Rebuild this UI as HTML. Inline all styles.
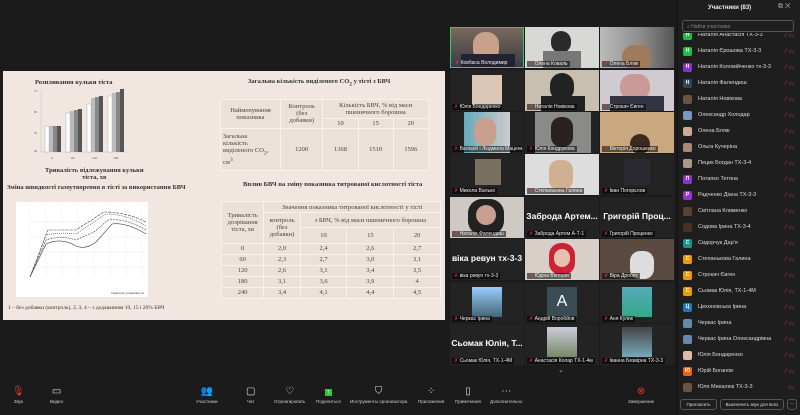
<!DOCTYPE html><html><head><meta charset="utf-8"><style>
*{margin:0;padding:0;box-sizing:border-box}
body{width:800px;height:415px;background:#1b1b1b;position:relative;overflow:hidden;font-family:"Liberation Sans",sans-serif;color:#ddd}
.a{position:absolute}
.slide{left:3px;top:71px;width:442px;height:249px;background:#f1e7e0;font-family:"Liberation Serif",serif;color:#333}
.slide .t{position:absolute;font-size:6.5px;font-weight:bold;white-space:nowrap}
table{border-collapse:collapse;font-size:6.5px;position:absolute;color:#444}
td{text-align:center;padding:0 2px;border:1px solid #f8f2ec;background:#ebe1d9}
.cell{position:absolute;width:74px;height:41px;background:#232323;overflow:hidden}
.nm{position:absolute;left:2px;bottom:1px;font-size:5px;color:#eee;background:rgba(0,0,0,.55);padding:0 2px;white-space:nowrap;max-width:70px;overflow:hidden}
.nm:before{content:"✗ ";color:#e33}
.big{position:absolute;top:14px;width:100%;text-align:center;font-size:8.5px;font-weight:bold;color:#fff;white-space:nowrap}
.ph{position:absolute}
.row{position:absolute;left:6px;height:16px;width:115px;font-size:5.5px;color:#ddd;display:flex;align-items:center}
.av{width:9px;height:9px;border-radius:2px;margin-right:6px;font-size:5px;color:#fff;text-align:center;line-height:9px;font-weight:bold;flex:none}
.ic{position:absolute;right:4px;color:#d44;font-size:6px}
.tb{position:absolute;top:385px;font-size:4.5px;color:#ccc;text-align:center;white-space:nowrap}
.tb i{display:block;font-style:normal;font-size:10px;height:14px;line-height:14px;color:#ddd}
</style></head><body>
<div class="a slide">
<div class="t" style="left:32px;top:8px">Розпливання кульки тіста</div>
<svg class="a" style="left:18px;top:15px" width="112" height="82">
<g fill="none" stroke="#bbb" stroke-width=".4"><line x1="20" y1="4" x2="20" y2="66"/><line x1="20" y1="66" x2="108" y2="66"/></g>
<g font-size="3" fill="#555"><text x="13" y="6">75</text><text x="13" y="27">60</text><text x="13" y="48">50</text><text x="13" y="66">40</text></g>
<g><rect x="24" y="40" width="4" height="26" fill="#fff" stroke="#888" stroke-width=".3"/><rect x="28" y="40" width="4" height="26" fill="#bbb"/><rect x="32" y="40" width="4" height="26" fill="#888"/><rect x="36" y="40" width="4" height="26" fill="#555"/>
<rect x="45" y="27" width="4" height="39" fill="#fff" stroke="#888" stroke-width=".3"/><rect x="49" y="25" width="4" height="41" fill="#bbb"/><rect x="53" y="24" width="4" height="42" fill="#888"/><rect x="57" y="23" width="4" height="43" fill="#555"/>
<rect x="66" y="18" width="4" height="48" fill="#fff" stroke="#888" stroke-width=".3"/><rect x="70" y="12" width="4" height="54" fill="#bbb"/><rect x="74" y="11" width="4" height="55" fill="#888"/><rect x="78" y="10" width="4" height="56" fill="#555"/>
<rect x="87" y="10" width="4" height="56" fill="#fff" stroke="#888" stroke-width=".3"/><rect x="91" y="7" width="4" height="59" fill="#bbb"/><rect x="95" y="6" width="4" height="60" fill="#888"/><rect x="99" y="3" width="4" height="63" fill="#555"/></g>
<g font-size="3.5" fill="#555"><text x="30" y="73">0</text><text x="50" y="73">60</text><text x="71" y="73">120</text><text x="92" y="73">180</text></g></svg>
<div class="t" style="left:42px;top:96px;text-align:center">Тривалість відлежування кульки<br>тіста, хв</div>
<div class="t" style="left:4px;top:113px">Зміна швидкості газоутворення в тісті за використання БВЧ</div>
<svg class="a" style="left:13px;top:131px;background:#fff" width="132" height="95">
<g stroke="#ddd" stroke-width=".3"><path d="M14 5v70M30 5v70M46 5v70M62 5v70M78 5v70M94 5v70M110 5v70M126 5v70M14 20h115M14 35h115M14 50h115M14 65h115"/></g>
<g fill="none" stroke="#444" stroke-width=".6"><path d="M14 75L30 42Q45 35 60 44Q70 48 80 40L96 22Q110 20 130 32"/><path d="M14 75L30 38Q45 33 60 38L78 30L92 18Q110 16 130 28" stroke-dasharray="2 1"/><path d="M14 75L30 33Q45 30 60 32L90 12Q110 12 130 24" stroke-dasharray="1 1"/><path d="M14 75L32 28L60 28L88 10Q110 10 130 20" stroke-dasharray="3 1"/></g>
<text x="95" y="92" font-size="3" fill="#333">Тривалість дозрівання, хв</text></svg>
<div class="a" style="left:5px;top:234px;font-size:5.5px">1 – без добавки (контроль), 2, 3, 4 – з додаванням 10, 15 і 20% БВЧ</div>
<div class="t" style="left:245px;top:7px">Загальна кількість виділеного CO<sub>2</sub> у тісті з БВЧ</div>
<table style="left:217px;top:28px;width:209px;height:72px">
<tr><td rowspan="2" style="width:60px">Найменування<br>показника</td><td rowspan="2">Контроль<br>(без<br>добавки)</td><td colspan="3">Кількість БВЧ, % від маси<br>пшеничного борошна</td></tr>
<tr><td>10</td><td>15</td><td>20</td></tr>
<tr><td style="text-align:left">Загальна<br>кількість<br>виділеного CO<sub>2</sub>,<br>см<sup>3</sup></td><td>1200</td><td>1368</td><td>1510</td><td>1596</td></tr></table>
<div class="t" style="left:240px;top:110px">Вплив БВЧ на зміну показника титрованої кислотності тіста</div>
<table style="left:218px;top:130px;width:220px;height:98px">
<tr><td rowspan="3">Тривалість<br>дозрівання<br>тіста, хв</td><td colspan="4">Значення показника титрованої кислотності у тісті</td></tr>
<tr><td rowspan="2">контроль<br>(без<br>добавки)</td><td colspan="3">з БВЧ, % від маси пшеничного борошна</td></tr>
<tr><td>10</td><td>15</td><td>20</td></tr>
<tr><td>0</td><td>2,0</td><td>2,4</td><td>2,6</td><td>2,7</td></tr>
<tr><td>60</td><td>2,3</td><td>2,7</td><td>3,0</td><td>3,1</td></tr>
<tr><td>120</td><td>2,6</td><td>3,1</td><td>3,4</td><td>3,5</td></tr>
<tr><td>180</td><td>3,1</td><td>3,6</td><td>3,9</td><td>4</td></tr>
<tr><td>240</td><td>3,4</td><td>4,1</td><td>4,4</td><td>4,5</td></tr></table>
</div>

<div class="cell" style="left:450px;top:27px;background:linear-gradient(#7a6a5a,#3a3a48);border:1px solid #2ecc71"><div class="ph" style="left:22px;top:4px;width:26px;height:30px;border-radius:12px;background:#c9a08a"></div><div class="ph" style="left:10px;top:26px;width:54px;height:16px;background:#223"></div><div class="nm" style="background:none">Ковбаса Володимир</div></div>
<div class="cell" style="left:525px;top:27px;background:#d8d8d4"><div class="ph" style="left:26px;top:4px;width:20px;height:22px;border-radius:10px;background:#2a2a2a"></div><div class="ph" style="left:18px;top:24px;width:38px;height:18px;background:#777"></div><div class="nm">Олена Коваль</div></div>
<div class="cell" style="left:600px;top:27px;background:linear-gradient(90deg,#bbb,#888 60%,#555)"><div class="ph" style="left:22px;top:18px;width:30px;height:24px;border-radius:12px;background:#a07a5a"></div><div class="nm">Олена Бляж</div></div>
<div class="cell" style="left:450px;top:70px"><div class="ph" style="left:22px;top:5px;width:30px;height:30px;background:#ddc8b8"></div><div class="nm">Юлія Бондаренко</div></div>
<div class="cell" style="left:525px;top:70px;background:#c8bfb0"><div class="ph" style="left:25px;top:3px;width:24px;height:28px;border-radius:12px;background:#222"></div><div class="ph" style="left:16px;top:26px;width:44px;height:16px;background:#222"></div><div class="nm">Наталія Новікова</div></div>
<div class="cell" style="left:600px;top:70px;background:#cfcbd0"><div class="ph" style="left:20px;top:4px;width:30px;height:26px;border-radius:12px;background:#c99"></div><div class="ph" style="left:10px;top:26px;width:54px;height:16px;background:#334"></div><div class="nm">Строкач Євген</div></div>
<div class="cell" style="left:450px;top:112px"><div class="ph" style="left:14px;top:0;width:46px;height:41px;background:linear-gradient(90deg,#6ab,#ccc)"></div><div class="ph" style="left:24px;top:6px;width:22px;height:28px;border-radius:10px;background:#c9a090"></div><div class="nm">Валерій і Людмила Маценко</div></div>
<div class="cell" style="left:525px;top:112px"><div class="ph" style="left:10px;top:0;width:56px;height:41px;background:#8a8a88"></div><div class="ph" style="left:26px;top:5px;width:22px;height:30px;border-radius:10px;background:#2a2222"></div><div class="nm">Юлія Кондрукова</div></div>
<div class="cell" style="left:600px;top:112px;background:#c9a880"><div class="ph" style="left:30px;top:22px;width:20px;height:20px;border-radius:10px;background:#3a2a20"></div><div class="nm">Вікторія Дорошенко</div></div>
<div class="cell" style="left:450px;top:154px"><div class="ph" style="left:25px;top:5px;width:26px;height:26px;background:#7a7060"></div><div class="nm">Микола Валько</div></div>
<div class="cell" style="left:525px;top:154px;background:#ddd"><div class="ph" style="left:24px;top:6px;width:24px;height:30px;border-radius:10px;background:#d0b090"></div><div class="nm">Степанькова Галина</div></div>
<div class="cell" style="left:600px;top:154px"><div class="ph" style="left:24px;top:5px;width:26px;height:26px;background:#2a2a30"></div><div class="nm">Іван Погорєлов</div></div>
<div class="cell" style="left:450px;top:197px;background:#cfc9c3"><div class="ph" style="left:18px;top:2px;width:36px;height:36px;border-radius:14px;background:#222"></div><div class="ph" style="left:26px;top:8px;width:20px;height:20px;border-radius:10px;background:#c9a090"></div><div class="nm">Наталія Фалендиш</div></div>
<div class="cell" style="left:525px;top:197px"><div class="big">Заброда Артем...</div><div class="nm">Заброда Артем А-Т-1</div></div>
<div class="cell" style="left:600px;top:197px"><div class="big">Григорій Проц...</div><div class="nm">Григорій Проценко</div></div>
<div class="cell" style="left:450px;top:239px"><div class="big">віка ревун тх-3-3</div><div class="nm">віка ревун тх-3-3</div></div>
<div class="cell" style="left:525px;top:239px;background:#d8d0c8"><div class="ph" style="left:24px;top:4px;width:26px;height:32px;border-radius:12px;background:#c23"></div><div class="ph" style="left:29px;top:10px;width:16px;height:18px;border-radius:8px;background:#e8c0b0"></div><div class="nm">Юдіна Вікторія</div></div>
<div class="cell" style="left:600px;top:239px;background:#5a4a40"><div class="ph" style="left:30px;top:12px;width:24px;height:28px;border-radius:10px;background:#ddd"></div><div class="nm">Віра Дробот</div></div>
<div class="cell" style="left:450px;top:282px"><div class="ph" style="left:22px;top:5px;width:30px;height:30px;background:linear-gradient(#9cf,#467)"></div><div class="nm">Черкас Ірина</div></div>
<div class="cell" style="left:525px;top:282px"><div class="ph" style="left:22px;top:5px;width:30px;height:30px;background:#3a4d55;color:#fff;font-size:16px;text-align:center;line-height:30px">A</div><div class="nm">Андрій Воробйов</div></div>
<div class="cell" style="left:600px;top:282px"><div class="ph" style="left:22px;top:5px;width:30px;height:30px;background:linear-gradient(#5ab,#3a8)"></div><div class="nm">Аня Кулик</div></div>
<div class="cell" style="left:450px;top:324px"><div class="big">Сьомак Юлія, Т...</div><div class="nm">Сьомак Юлія, ТХ-1-4М</div></div>
<div class="cell" style="left:525px;top:324px"><div class="ph" style="left:22px;top:3px;width:30px;height:30px;background:linear-gradient(#ccd,#786)"></div><div class="nm">Анастасія Колар ТХ-1-4м</div></div>
<div class="cell" style="left:600px;top:324px"><div class="ph" style="left:22px;top:3px;width:30px;height:30px;background:linear-gradient(#444,#7ab)"></div><div class="nm">Іванна Безвірна ТХ-3-3</div></div>
<div class="a" style="left:558px;top:366px;font-size:7px;color:#aaa">⌄</div>

<div class="a" style="left:677px;top:0;width:123px;height:415px;background:#1e1e1e;border-left:1px solid #111"></div>
<div class="a" style="left:708px;top:5px;font-size:6px;font-weight:bold;color:#eee">Участники (83)</div>
<div class="a" style="left:778px;top:3px;font-size:7px;color:#aaa">⧉ ✕</div>
<div class="a" style="left:682px;top:20px;width:112px;height:12px;border:1px solid #555;border-radius:3px;font-size:5px;color:#888;padding:3px 4px">⌕ Найти участника</div>
<div class="a" id="plist" style="left:677px;top:33px;width:123px;height:362px;overflow:hidden"></div>
<div class="a" style="left:680px;top:399px;width:37px;height:11px;border:1px solid #555;border-radius:3px;font-size:4.5px;color:#ddd;text-align:center;line-height:9px">Пригласить</div>
<div class="a" style="left:720px;top:399px;width:64px;height:11px;border:1px solid #555;border-radius:3px;font-size:4.5px;color:#ddd;text-align:center;line-height:9px">Выключить звук для всех</div>
<div class="a" style="left:787px;top:399px;width:10px;height:11px;border:1px solid #555;border-radius:3px;font-size:5px;color:#ddd;text-align:center;line-height:8px">···</div>
<script>
var p=[["Н","#2b4","Наталія Анастасія ТХ-3-3"],["Н","#2b4","Наталія Єрошова ТХ-3-3"],["Н","#83c","Наталія Коломійченко тх-3-3"],["Н","#345","Наталія Фалендиш"],["","#654","Наталія Новікова"],["","#79b","Олександр Холодар"],["","#ca9","Олена Бляж"],["","#a87","Ольга Кучеріна"],["","#a98","Пецик Богдан ТХ-3-4"],["П","#83c","Потапко Тетяна"],["Р","#93c","Радченко Діана ТХ-3-3"],["","#543","Світлана Клименко"],["","#432","Содова Ірина ТХ-3-4"],["С","#198","Сидорчук Дар'я"],["С","#e90","Степанькова Галина"],["С","#e90","Строкач Євген"],["С","#e90","Сьомак Юлія, ТХ-1-4М"],["Ц","#27b","Цехоновська Ірина"],["","#68a","Черкас Ірина"],["","#68a","Черкас Ірина Олександрівна"],["","#dba","Юлія Бондаренко"],["Ю","#e60","Юрій Боганов"],["","#654","Юля Михалюк ТХ-3-3"]];
var h="";p.forEach(function(r,i){h+='<div class="row" style="top:'+(-6+i*16)+'px"><div class="av" style="background:'+r[1]+'">'+r[0]+'</div>'+r[2]+'<span class="ic">'+(i==22?'':'⁄ ')+'▭</span></div>'});document.getElementById("plist").innerHTML=h;
</script>

<div class="a" style="left:0;top:384px;width:677px;height:31px;background:#1b1b1b"></div>
<div class="tb" style="left:12px"><i style="color:#e33">🎙</i>Звук</div>
<div class="tb" style="left:50px"><i>▭</i>Видео</div>
<div class="tb" style="left:196px"><i>👥</i>Участники</div>
<div class="tb" style="left:246px"><i>▢</i>Чат</div>
<div class="tb" style="left:274px"><i>♡</i>Отреагировать</div>
<div class="tb" style="left:316px"><i><span style="background:#2c4;color:#fff;padding:0 2px;font-size:7px">↑</span></i>Поделиться</div>
<div class="tb" style="left:350px"><i>⛉</i>Инструменты организатора</div>
<div class="tb" style="left:418px"><i>⁘</i>Приложения</div>
<div class="tb" style="left:455px"><i>▯</i>Примечания</div>
<div class="tb" style="left:490px"><i>⋯</i>Дополнительно</div>
<div class="tb" style="left:628px"><i style="color:#e33">⊗</i>Завершение</div>
</body></html>
